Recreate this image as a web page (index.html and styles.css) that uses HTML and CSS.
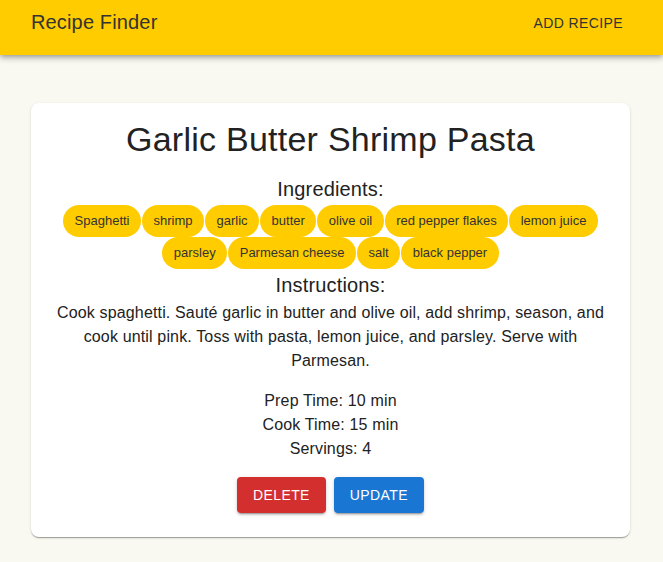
FILE: index.html
```html
<!DOCTYPE html>
<html>
<head>
<meta charset="utf-8">
<link rel="stylesheet" href="styles.css">
</head>
<body>
<header class="appbar">
  <div class="brand">Recipe Finder</div>
  <button class="add-btn">ADD RECIPE</button>
</header>
<main class="content">
  <section class="card">
    <h1 class="title">Garlic Butter Shrimp Pasta</h1>
    <h2 class="subhead">Ingredients:</h2>
    <div class="chips">
      <span class="chip">Spaghetti</span>
      <span class="chip">shrimp</span>
      <span class="chip">garlic</span>
      <span class="chip">butter</span>
      <span class="chip">olive oil</span>
      <span class="chip">red pepper flakes</span>
      <span class="chip">lemon juice</span>
      <span class="chip">parsley</span>
      <span class="chip">Parmesan cheese</span>
      <span class="chip">salt</span>
      <span class="chip">black pepper</span>
    </div>
    <h2 class="subhead subhead-instr">Instructions:</h2>
    <p class="instructions">Cook spaghetti. Sauté garlic in butter and olive oil, add shrimp, season, and cook until pink. Toss with pasta, lemon juice, and parsley. Serve with Parmesan.</p>
    <div class="meta">
      <div>Prep Time: 10 min</div>
      <div>Cook Time: 15 min</div>
      <div>Servings: 4</div>
    </div>
    <div class="actions">
      <button class="btn btn-delete">DELETE</button>
      <button class="btn btn-update">UPDATE</button>
    </div>
  </section>
</main>
</body>
</html>
```
FILE: styles.css
```css
* { box-sizing: border-box; }
html, body { margin: 0; padding: 0; }
body {
  background: #f9f9f1;
  font-family: "Liberation Sans", Arial, sans-serif;
  color: #222;
  min-height: 562px;
}
.appbar {
  height: 55px;
  background: #ffcc00;
  display: flex;
  align-items: center;
  justify-content: space-between;
  padding: 0 24px 10px 31px;
  box-shadow: 0 2px 4px -1px rgba(0,0,0,0.2), 0 4px 5px 0 rgba(0,0,0,0.14), 0 1px 10px 0 rgba(0,0,0,0.12);
  position: relative;
}
.brand {
  font-family: "Liberation Sans", Arial, sans-serif;
  font-size: 20px;
  letter-spacing: 0.15px;
  color: #333;
}
.add-btn {
  font-family: "Liberation Sans", Arial, sans-serif;
  font-size: 14px;
  font-weight: 400;
  color: #333;
  background: none;
  border: 0;
  padding: 6px 16px;
  letter-spacing: 0.4px;
}
.content {
  padding: 48px 33px 24px 31px;
}
.card {
  background: #fff;
  border-radius: 8px;
  box-shadow: 0 2px 1px -1px rgba(0,0,0,0.2), 0 1px 1px 0 rgba(0,0,0,0.14), 0 1px 3px 0 rgba(0,0,0,0.12);
  padding: 14px 24px 24px;
  text-align: center;
}
.title {
  font-size: 34px;
  letter-spacing: 0.25px;
  font-weight: 400;
  margin: 0 0 16px;
  line-height: 44px;
}
.subhead {
  font-size: 20px;
  letter-spacing: 0.15px;
  font-weight: 400;
  margin: 0;
  line-height: 24px;
}
.subhead-instr {
  margin-bottom: 4px;
}
.chips {
  display: flex;
  flex-wrap: wrap;
  justify-content: center;
  gap: 0 1px;
  margin: 4px 0 4px;
}
.chip {
  background: #ffcc00;
  height: 32px;
  line-height: 32px;
  border-radius: 16px;
  padding: 0 11.5px;
  font-size: 13px;
  color: #333;
}
.instructions {
  font-size: 16px;
  letter-spacing: 0.15px;
  line-height: 24px;
  margin: 0 0 16px;
}
.meta {
  font-size: 16px;
  letter-spacing: 0.15px;
  line-height: 24px;
  margin-bottom: 16px;
}
.actions {
  display: flex;
  justify-content: center;
  gap: 8px;
}
.btn {
  font-family: "Liberation Sans", Arial, sans-serif;
  font-size: 14px;
  letter-spacing: 0.4px;
  color: #fff;
  border: 0;
  border-radius: 4px;
  height: 36px;
  padding: 0 16px;
  box-shadow: 0 3px 1px -2px rgba(0,0,0,0.2), 0 2px 2px 0 rgba(0,0,0,0.14), 0 1px 5px 0 rgba(0,0,0,0.12);
}
.btn-delete { background: #d32f2f; }
.btn-update { background: #1976d2; }
```
